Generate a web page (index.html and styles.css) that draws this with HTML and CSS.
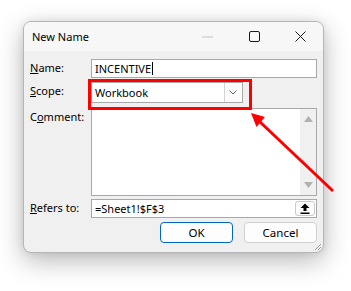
FILE: index.html
```html
<!DOCTYPE html>
<html lang="en">

<head>
    <meta charset="UTF-8">
    <title>New Name</title>
    <link rel="stylesheet" href="styles.css">
</head>

<body>
    <div class="dialog">
        <!-- Title bar with caption buttons -->
        <div class="titlebar">
            <span class="title">New Name</span>
            <div class="caption">
                <span class="cap-btn">
                    <svg width="12" height="2" viewBox="0 0 12 2"><line x1="0" y1="1" x2="11" y2="1" stroke="#c4c4c4" stroke-width="1"/></svg>
                </span>
                <span class="cap-btn">
                    <svg width="11" height="11" viewBox="0 0 11 11"><rect x="0.5" y="0.5" width="10" height="10" rx="1.5" fill="none" stroke="#1a1a1a" stroke-width="1"/></svg>
                </span>
                <span class="cap-btn">
                    <svg width="11" height="11" viewBox="0 0 11 11"><path d="M0.5 0.5 L10.5 10.5 M10.5 0.5 L0.5 10.5" stroke="#1a1a1a" stroke-width="1"/></svg>
                </span>
            </div>
        </div>

        <!-- Form rows -->
        <div class="form">
            <div class="row row-name">
                <label class="lbl"><u>N</u>ame:</label>
                <div class="field">INCENTIVE<span class="caret"></span></div>
            </div>
            <div class="row row-scope">
                <label class="lbl"><u>S</u>cope:</label>
                <div class="field select">
                    <span>Workbook</span>
                    <span class="drop">
                        <svg width="8" height="5" viewBox="0 0 8 5"><path d="M0.5 0.5 L4 4 L7.5 0.5" fill="none" stroke="#666" stroke-width="1"/></svg>
                    </span>
                </div>
            </div>
            <div class="row row-comment">
                <label class="lbl">C<u>o</u>mment:</label>
                <div class="field memo">
                    <div class="scrollbar">
                        <svg width="9" height="6" viewBox="0 0 9 6"><path d="M0 6 L4.5 0 L9 6 Z" fill="#b0b0b0"/></svg>
                        <svg width="9" height="6" viewBox="0 0 9 6"><path d="M0 0 L4.5 6 L9 0 Z" fill="#b0b0b0"/></svg>
                    </div>
                </div>
            </div>
            <div class="row row-refers">
                <label class="lbl"><u>R</u>efers to:</label>
                <div class="field ref">
                    <span>=Sheet1!$F$3</span>
                    <span class="collapse">
                        <svg width="10" height="11" viewBox="0 0 10 11"><path d="M5 0.5 L9.5 5 L6.5 5 L6.5 8 L3.5 8 L3.5 5 L0.5 5 Z" fill="#000"/><rect x="0.5" y="9.5" width="9" height="1.5" fill="#000"/></svg>
                    </span>
                </div>
            </div>
            <div class="buttons">
                <button class="btn btn-default">OK</button>
                <button class="btn">Cancel</button>
            </div>
        </div>

        <!-- Resize grip in the corner -->
        <svg class="grip" width="8" height="8" viewBox="0 0 8 8">
            <path d="M7 1 L1 7 M7 4 L4 7" stroke="#9a9a9a" stroke-width="1"/>
        </svg>
    </div>

    <!-- Red annotation: box and arrow drawn over the dialog -->
    <svg class="annotation" width="351" height="291" viewBox="0 0 351 291">
        <rect x="89.5" y="80.5" width="161" height="28" fill="none" stroke="#ff0000" stroke-width="3"/>
        <line x1="333" y1="191" x2="259" y2="121" stroke="#ff0000" stroke-width="3"/>
        <polygon points="251,113 265,117 256.5,127" fill="#ff0000"/>
    </svg>
</body>

</html>
```

FILE: styles.css
```css
body {
    margin: 0;
    padding: 0;
    width: 351px;
    height: 291px;
    overflow: hidden;
    background-color: #ffffff;
    font-family: "Noto Sans", "Liberation Sans", sans-serif;
    font-size: 11px;
    color: #000000;
    position: relative;
}

.dialog {
    box-sizing: border-box;
    width: 301px;
    height: 232px;
    margin: 21px 0 0 23px;
    background-color: #f0f0f0;
    border: 1px solid #b5b5b5;
    border-radius: 8px;
    box-shadow: 0 8px 26px rgba(0, 0, 0, 0.28), 0 0 8px rgba(0, 0, 0, 0.08);
    position: relative;
}

.titlebar {
    height: 29px;
    display: flex;
    align-items: center;
    justify-content: space-between;
    background-color: #f7f7f7;
    border-radius: 7px 7px 0 0;
}

.title {
    padding-left: 8px;
    line-height: 16px;
}

.caption {
    display: flex;
    height: 29px;
}

.cap-btn {
    width: 46px;
    display: flex;
    align-items: center;
    justify-content: center;
}

.form {
    padding: 8px 6px 0 6px;
}

.row {
    display: flex;
}

.row-scope {
    margin-top: 4px;
}

.row-comment {
    margin-top: 5px;
}

.row-refers {
    margin-top: 3px;
}

.lbl {
    width: 61px;
    flex-shrink: 0;
    line-height: 17px;
}

.field {
    box-sizing: border-box;
    flex: 1;
    height: 19px;
    background-color: #ffffff;
    border: 1px solid #a8a8a8;
    padding-left: 3px;
    line-height: 17px;
    display: flex;
    align-items: center;
}

.caret {
    display: inline-block;
    width: 1px;
    height: 13px;
    margin-left: 1px;
    background-color: #000000;
}

.select {
    flex: 0 0 152px;
    height: 21px;
    justify-content: space-between;
    padding-right: 1px;
}

.drop {
    box-sizing: border-box;
    width: 17px;
    height: 19px;
    border-left: 1px solid #d4d4d4;
    background-color: #fbfbfb;
    display: flex;
    align-items: center;
    justify-content: center;
}

.memo {
    height: 88px;
    justify-content: flex-end;
    align-items: stretch;
    padding-right: 0;
}

.scrollbar {
    width: 16px;
    background-color: #f0f0f0;
    display: flex;
    flex-direction: column;
    justify-content: space-between;
    align-items: center;
    padding: 7px 0 7px 0;
}

.ref {
    justify-content: space-between;
    padding-right: 1px;
}

.collapse {
    box-sizing: border-box;
    width: 20px;
    height: 15px;
    border: 1px solid #c9c9c9;
    border-radius: 3px;
    background-color: #fdfdfd;
    display: flex;
    align-items: center;
    justify-content: center;
}

.buttons {
    display: flex;
    justify-content: flex-end;
    gap: 11px;
    margin-top: 4px;
}

.btn {
    box-sizing: border-box;
    width: 73px;
    height: 21px;
    padding: 0;
    font-family: "Noto Sans", "Liberation Sans", sans-serif;
    font-size: 11.5px;
    color: #000000;
    background-color: #fdfdfd;
    border: 1px solid #d0d0d0;
    border-radius: 4px;
}

.btn-default {
    border-color: #0067c0;
}

.grip {
    position: absolute;
    right: 1px;
    bottom: 1px;
}

.annotation {
    position: absolute;
    top: 0;
    left: 0;
    pointer-events: none;
}
```
